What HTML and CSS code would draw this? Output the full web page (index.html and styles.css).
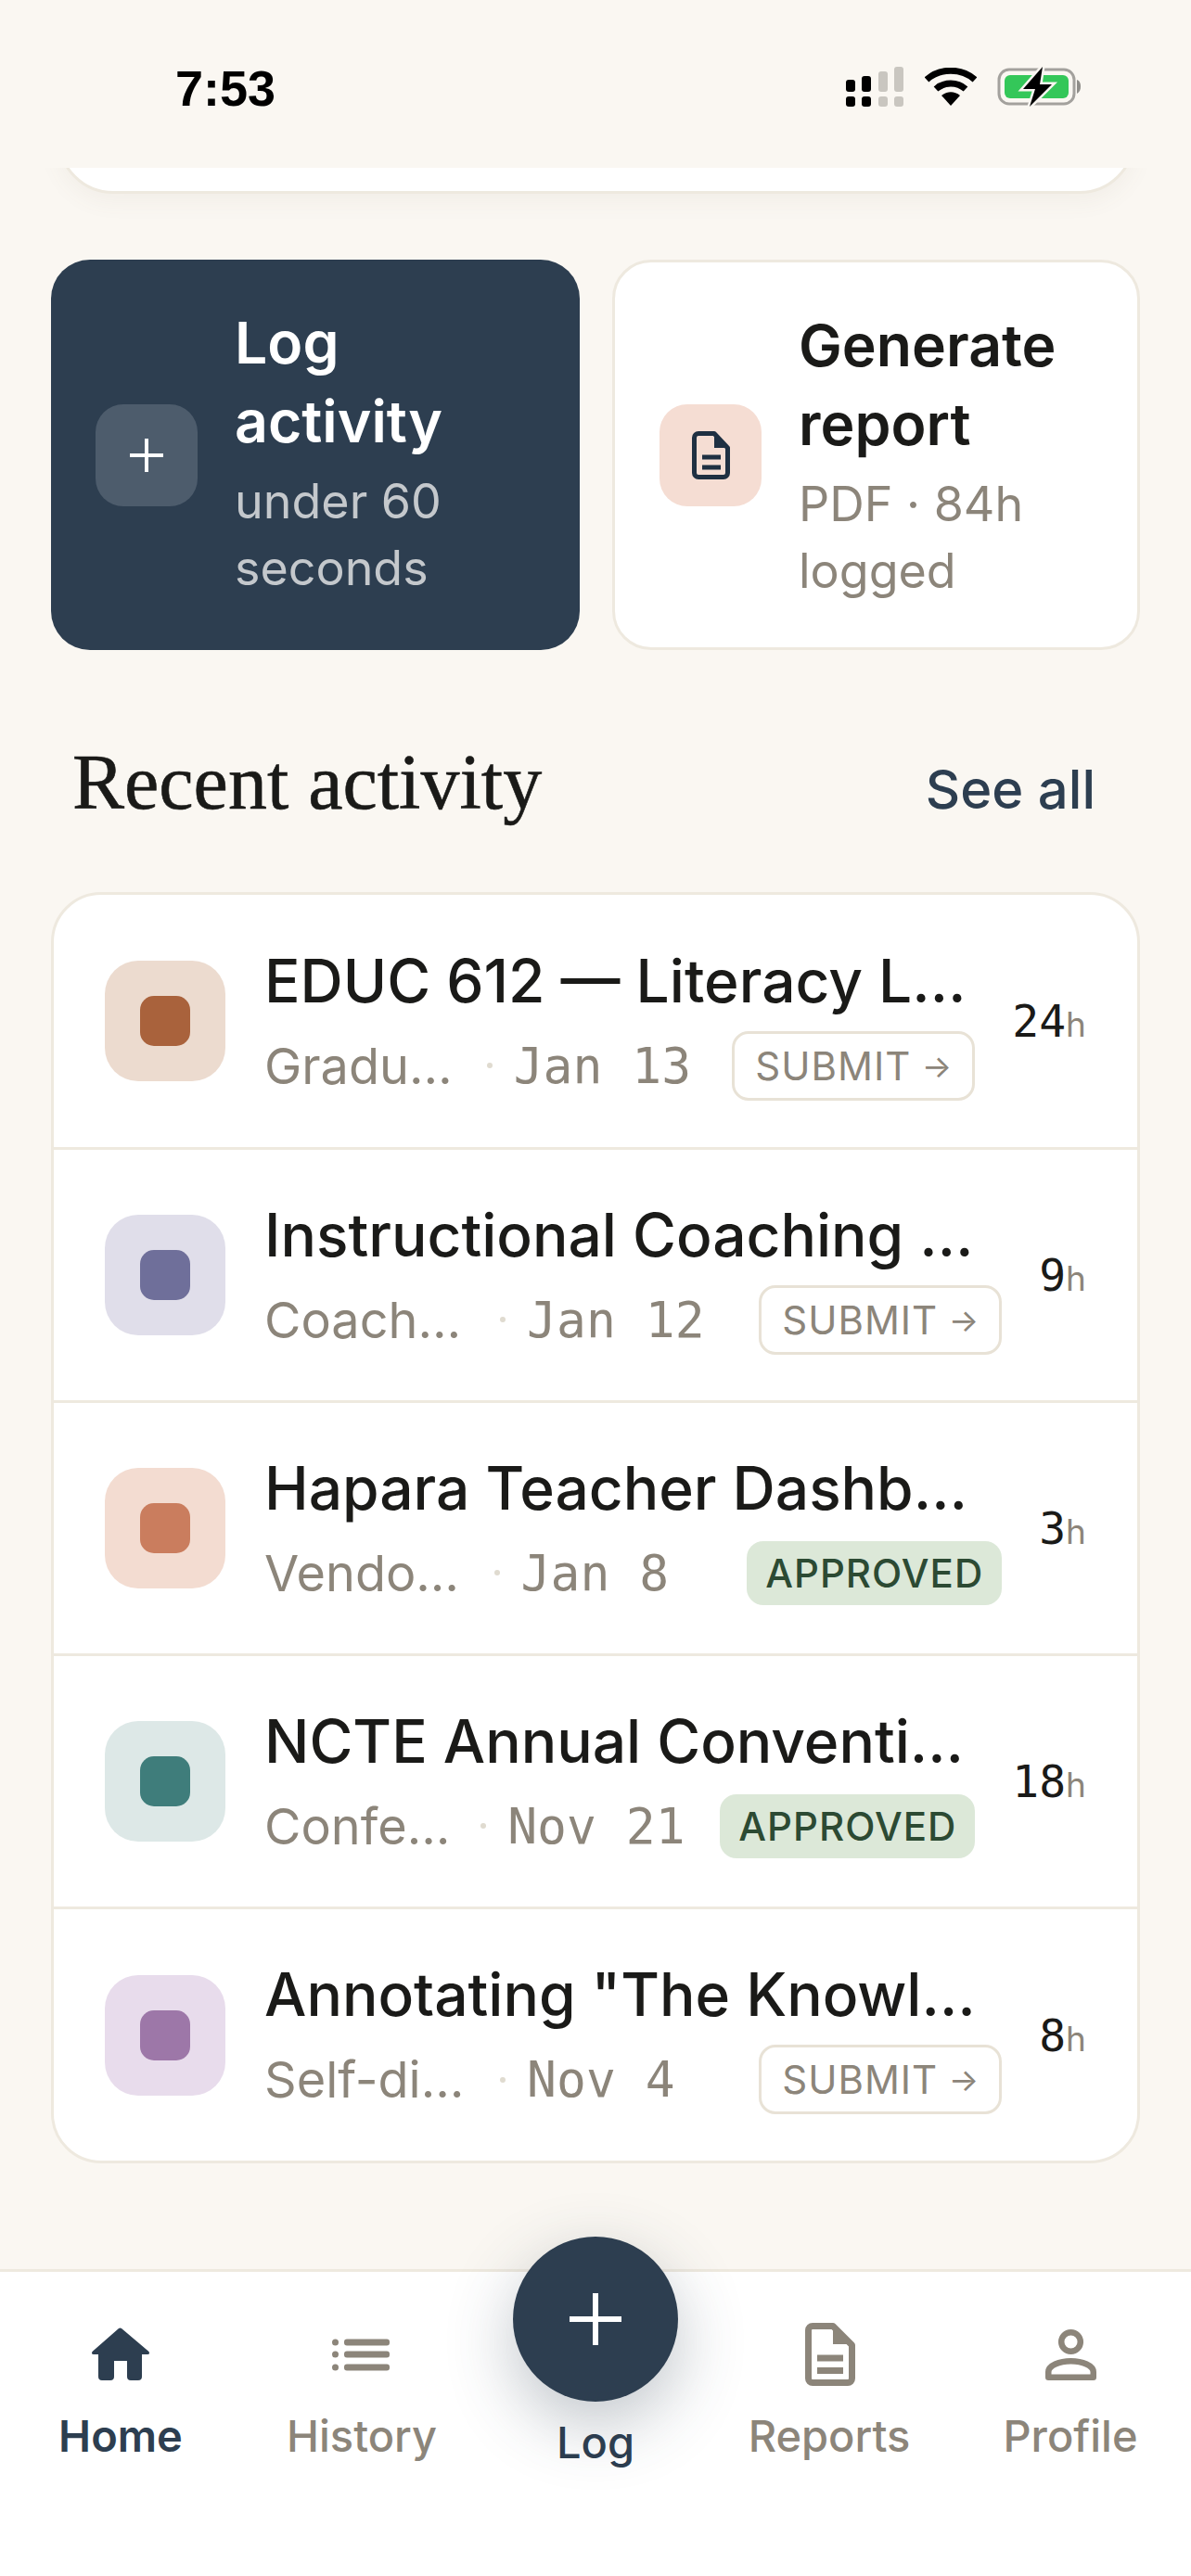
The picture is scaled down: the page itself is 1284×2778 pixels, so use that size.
FILE: index.html
```html
<!DOCTYPE html>
<html lang="en">
<head>
    <meta charset="UTF-8">
    <title>Home</title>
    <link rel="stylesheet" href="styles.css">
</head>
<body>
<div class="screen">
    <div class="status-bar">
        <span class="time">7:53</span>
        <div class="status-icons">
            <svg class="signal" width="63" height="43" viewBox="0 0 63 43">
                <rect x="0" y="14" width="10" height="13" rx="3" fill="#000"/>
                <rect x="17" y="10" width="10" height="17" rx="3" fill="#000"/>
                <rect x="35" y="5" width="10" height="22" rx="3" fill="#c9c6c0"/>
                <rect x="52" y="0" width="10" height="27" rx="3" fill="#c9c6c0"/>
                <rect x="0" y="32" width="10" height="11" rx="3" fill="#000"/>
                <rect x="17" y="32" width="10" height="11" rx="3" fill="#000"/>
                <rect x="35" y="32" width="10" height="11" rx="3" fill="#c9c6c0"/>
                <rect x="52" y="32" width="10" height="11" rx="3" fill="#c9c6c0"/>
            </svg>
            <svg class="wifi" width="56" height="41" viewBox="0 0 56 41">
                <path d="M2 13 C16 0 40 0 54 13" fill="none" stroke="#000" stroke-width="7"/>
                <path d="M12 23 C21 15 35 15 44 23" fill="none" stroke="#000" stroke-width="7"/>
                <path d="M18 30 C24 25 32 25 38 30 L28 41 Z" fill="#000"/>
            </svg>
            <svg class="battery" width="91" height="43" viewBox="0 0 91 43">
                <rect x="2" y="3" width="81" height="37" rx="11" fill="none" stroke="#a3a19d" stroke-width="3"/>
                <rect x="8" y="9" width="69" height="25" rx="6" fill="#34c759"/>
                <path d="M86 14 C89 15 90 18 90 21 C90 25 89 27 86 29 Z" fill="#8f8d89"/>
                <path d="M49 0 L28 24 L41 24 L35 43 L59 19 L46 19 Z" fill="#000" stroke="#f9f6f1" stroke-width="5" paint-order="stroke"/>
            </svg>
        </div>
    </div>

    <div class="content">
        <div class="clipped-card"></div>

        <div class="actions">
            <div class="action action-primary">
                <div class="action-icon">
                    <svg width="38" height="38" viewBox="0 0 38 38"><path d="M19 1v36M1 19h36" stroke="#fff" stroke-width="4"/></svg>
                </div>
                <div class="action-text">
                    <div class="action-title">Log activity</div>
                    <div class="action-sub">under 60 seconds</div>
                </div>
            </div>
            <div class="action">
                <div class="action-icon">
                    <svg width="41" height="52" viewBox="0 0 41 52">
                        <path d="M7 2.5h17l14.500 15.500v27a4.500 4.500 0 0 1-4.500 4.500H7a4.500 4.500 0 0 1-4.500-4.500V7A4.500 4.500 0 0 1 7 2.500z" fill="none" stroke="#1f3042" stroke-width="5" stroke-linejoin="round"/>
                        <path d="M24 1v17h16z" fill="#1f3042"/>
                        <path d="M11 28h20M11 39h20" stroke="#1f3042" stroke-width="5"/>
                    </svg>
                </div>
                <div class="action-text">
                    <div class="action-title">Generate report</div>
                    <div class="action-sub">PDF · 84h logged</div>
                </div>
            </div>
        </div>

        <div class="section-head">
            <h2 class="section-title">Recent activity</h2>
            <span class="see-all">See all</span>
        </div>

        <div class="list">
            <div class="row">
                <div class="thumb thumb-brown"><i></i></div>
                <div class="row-main">
                    <div class="row-title">EDUC 612 — Literacy Leadership Seminar</div>
                    <div class="row-meta">
                        <span class="source">Graduate Course</span>
                        <span class="dot"></span>
                        <span class="date">Jan 13</span>
                        <span class="chip chip-submit">SUBMIT<span class="arrow">→</span></span>
                    </div>
                </div>
                <div class="hours">24<small>h</small></div>
            </div>
            <div class="row">
                <div class="thumb thumb-slate"><i></i></div>
                <div class="row-main">
                    <div class="row-title">Instructional Coaching Cycle Workshop</div>
                    <div class="row-meta">
                        <span class="source">Coaching Session</span>
                        <span class="dot"></span>
                        <span class="date">Jan 12</span>
                        <span class="chip chip-submit">SUBMIT<span class="arrow">→</span></span>
                    </div>
                </div>
                <div class="hours">9<small>h</small></div>
            </div>
            <div class="row">
                <div class="thumb thumb-coral"><i></i></div>
                <div class="row-main">
                    <div class="row-title">Hapara Teacher Dashboard Training</div>
                    <div class="row-meta">
                        <span class="source">Vendor Training</span>
                        <span class="dot"></span>
                        <span class="date">Jan 8</span>
                        <span class="chip chip-approved">APPROVED</span>
                    </div>
                </div>
                <div class="hours">3<small>h</small></div>
            </div>
            <div class="row">
                <div class="thumb thumb-teal"><i></i></div>
                <div class="row-main">
                    <div class="row-title">NCTE Annual Convention Sessions</div>
                    <div class="row-meta">
                        <span class="source">Conference</span>
                        <span class="dot"></span>
                        <span class="date">Nov 21</span>
                        <span class="chip chip-approved">APPROVED</span>
                    </div>
                </div>
                <div class="hours">18<small>h</small></div>
            </div>
            <div class="row">
                <div class="thumb thumb-purple"><i></i></div>
                <div class="row-main">
                    <div class="row-title">Annotating "The Knowledge Gap" Book Study</div>
                    <div class="row-meta">
                        <span class="source">Self-directed Study</span>
                        <span class="dot"></span>
                        <span class="date">Nov 4</span>
                        <span class="chip chip-submit">SUBMIT<span class="arrow">→</span></span>
                    </div>
                </div>
                <div class="hours">8<small>h</small></div>
            </div>
        </div>
    </div>

    <div class="tabbar">
        <div class="tab tab-active">
            <svg class="tab-icon" width="78" height="78" viewBox="-7 -12 78 78">
                <path d="M30 1 Q31.500 0 33 1 L62.500 26 Q64 29 61 29 L55 29 L55 53 Q55 57 51 57 L43 57 Q39 57 39 53 L39 36 L25 36 L25 53 Q25 57 21 57 L12 57 Q8 57 8 53 L8 29 L3 29 Q0 29 1.500 26 Z" fill="#2d3e50"/>
            </svg>
            <span>Home</span>
        </div>
        <div class="tab">
            <svg class="tab-icon" width="78" height="78" viewBox="0 0 78 78">
                <g fill="#8c857a">
                    <circle cx="10.500" cy="28" r="3.500"/><circle cx="10.500" cy="41" r="3.500"/><circle cx="10.500" cy="55" r="3.500"/>
                    <rect x="20" y="24.500" width="49" height="7" rx="3"/><rect x="20" y="37.500" width="49" height="7" rx="3"/><rect x="20" y="51.500" width="49" height="7" rx="3"/>
                </g>
            </svg>
            <span>History</span>
        </div>
        <div class="tab tab-log">
            <div class="fab">
                <svg width="56" height="56" viewBox="0 0 56 56"><path d="M28 0v56M0 28h56" stroke="#fff" stroke-width="6"/></svg>
            </div>
            <span>Log</span>
        </div>
        <div class="tab">
            <svg class="tab-icon" width="78" height="78" viewBox="0 0 78 78">
                <path d="M21 10.500h22L63.500 31v36a4.500 4.500 0 0 1-4.500 4.500H21a4.500 4.500 0 0 1-4.500-4.500V15a4.500 4.500 0 0 1 4.500-4.500z" fill="none" stroke="#8c857a" stroke-width="7" stroke-linejoin="round"/>
                <path d="M43 8v22h23z" fill="#8c857a"/>
                <path d="M26 45h28M26 58.500h28" stroke="#8c857a" stroke-width="7"/>
            </svg>
            <span>Reports</span>
        </div>
        <div class="tab">
            <svg class="tab-icon" width="78" height="78" viewBox="0 0 78 78">
                <circle cx="39.500" cy="27.500" r="10.300" fill="none" stroke="#8c857a" stroke-width="6.500"/>
                <path d="M15.250 65.750V60C15.250 53 27 48.250 39.500 48.250S63.750 53 63.750 60V65.750Z" fill="none" stroke="#8c857a" stroke-width="6.500" stroke-linejoin="round"/>
            </svg>
            <span>Profile</span>
        </div>
    </div>
</div>
</body>
</html>
```

FILE: styles.css
```css
*{
    margin:0;padding:0;
    box-sizing:border-box;
}
body{
    background:#faf7f2;
    font-family:"Inter","Liberation Sans",sans-serif;
    color:#1a1a18;
}
.screen{
    width:1284px;
    height:2778px;
    display:flex;
    flex-direction:column;
    overflow:hidden;
}

/* status bar */
.status-bar{
    position:relative;
    z-index:1;
    height:181px;
    flex:none;
    display:flex;
    justify-content:space-between;
    align-items:flex-start;
    padding:72px 118px 0 189px;
    background:#faf7f2;
}
.time{
    font-family:"Liberation Sans",sans-serif;
    font-weight:700;
    font-size:54px;
    line-height:46px;
    color:#000;
}
.status-icons{
    display:flex;
    align-items:flex-start;
    gap:22px;
}
.wifi{margin-top:1px}

/* scroll area */
.content{
    flex:1;
    padding:0 55px;
}
.clipped-card{
    height:120px;
    margin:-92px 5px 71px 7px;
    background:#fff;
    border:3px solid #eee9df;
    border-radius:60px;
    box-shadow:0 9px 24px rgba(120,110,90,.06);
}
.actions{
    display:grid;
    grid-template-columns:570px 569px;
    gap:35px;
}
.action{
    height:421px;
    display:flex;
    align-items:center;
    gap:40px;
    padding:0 48px;
    background:#fff;
    border:3px solid #eee9df;
    border-radius:42px;
}
.action-primary{
    background:#2d3e50;
    border:none;
    color:#fff;
}
.action-primary .action-text{margin-top:-6px}
.action-icon{
    width:110px;
    height:110px;
    flex:none;
    display:flex;
    align-items:center;
    justify-content:center;
    border-radius:30px;
    background:#f5ddd3;
}
.action-primary .action-icon{
    background:#4d5c6c;
}
.action-title{
    font-size:62.5px;
    line-height:85px;
    font-weight:600;
}
.action-sub{
    margin-top:8px;
    font-size:52px;
    line-height:72px;
    color:#8c857a;
}
.action-primary .action-sub{
    color:#c4c8cc;
}

/* section heading */
.section-head{
    display:flex;
    justify-content:space-between;
    align-items:baseline;
    padding:0 48px 0 23px;
    margin-top:95px;
}
.section-title{
    font-family:"Liberation Serif",serif;
    font-weight:400;
    font-size:84px;
    line-height:96px;
    -webkit-text-stroke:.6px #1a1a18;
}
.see-all{
    font-size:58px;
    font-weight:500;
    color:#2d3e50;
}

/* activity list */
.list{
    margin-top:70px;
    background:#fff;
    border:3px solid #eee9df;
    border-radius:54px;
    overflow:hidden;
}
.row{
    height:273px;
    display:flex;
    align-items:center;
    gap:40px;
    padding:0 55px;
    border-bottom:3px solid #eee9df;
}
.row:first-child{
    height:275px;
}
.row:last-child{
    height:271px;
    border-bottom:none;
}
.thumb{
    width:130px;
    height:130px;
    flex:none;
    display:flex;
    align-items:center;
    justify-content:center;
    margin-right:2px;
    border-radius:36px;
}
.thumb i{
    display:block;
    width:54px;
    height:54px;
    border-radius:15px;
}
.thumb-brown{background:#ecdbcf}
.thumb-brown i{background:#a9623c}
.thumb-slate{background:#e0deea}
.thumb-slate i{background:#6f6f9a}
.thumb-coral{background:#f3dcd1}
.thumb-coral i{background:#ca7d5e}
.thumb-teal{background:#dde8e7}
.thumb-teal i{background:#3f7d7b}
.thumb-purple{background:#e8dcec}
.thumb-purple i{background:#9d77a8}

.row-main{
    flex:1;
    min-width:0;
}
.row-title{
    font-size:64px;
    font-weight:500;
    line-height:84px;
    white-space:nowrap;
    overflow:hidden;
    text-overflow:ellipsis;
}
.row-meta{
    height:75px;
    margin-top:12px;
    display:flex;
    align-items:center;
    gap:27px;
    font-size:54px;
    color:#8c857a;
}
.source{
    flex:1 1 0;
    min-width:0;
    white-space:nowrap;
    overflow:hidden;
    text-overflow:ellipsis;
}
.dot{
    width:6px;
    height:6px;
    flex:none;
    margin:0 -4px 0 4px;
    border-radius:50%;
    background:#e0dbd0;
}
.date{
    flex:1 1 0;
    min-width:0;
    font-family:"DejaVu Sans Mono","Liberation Mono",monospace;
    font-size:53px;
    white-space:nowrap;
}
.chip{
    flex:none;
    display:flex;
    align-items:center;
    border-radius:18px;
    font-size:42px;
    letter-spacing:1px;
    white-space:nowrap;
}
.chip-submit{
    width:262px;
    height:75px;
    padding:0 22px;
    justify-content:space-between;
    border:3px solid #e8e2d6;
}
.arrow{
    font-size:34px;
    letter-spacing:0;
}
.chip-approved{
    height:69px;
    padding:0 20px;
    background:#dce8d8;
    color:#2c4a33;
    font-weight:500;
}
.hours{
    flex:none;
    font-family:"DejaVu Sans Mono","Liberation Mono",monospace;
    font-size:48px;
}
.hours small{
    font-family:"Inter",sans-serif;
    font-size:37px;
    color:#8c857a;
}

/* bottom tabs */
.tabbar{
    height:331px;
    flex:none;
    display:grid;
    grid-template-columns:260px 260px 244px 260px 260px;
    background:#fff;
    border-top:3px solid #eee9df;
}
.tab{
    position:relative;
    display:flex;
    flex-direction:column;
    align-items:center;
    padding-top:48px;
    font-size:47px;
    font-weight:500;
    color:#8c857a;
}
.tab-icon{
    flex:none;
    margin-bottom:22px;
}
.tab-active{
    color:#2d3e50;
    font-weight:600;
}
.tab-log{
    color:#2d3e50;
    padding-top:155px;
}
.fab{
    position:absolute;
    top:-38px;
    left:33px;
    width:178px;
    height:178px;
    display:flex;
    align-items:center;
    justify-content:center;
    border-radius:50%;
    background:#2d3e50;
    box-shadow:0 24px 72px rgba(45,62,80,.3);
}
```
